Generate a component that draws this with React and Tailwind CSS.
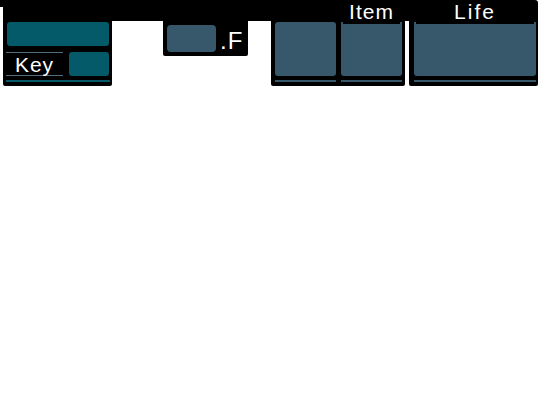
export default function App() {
  const font = { fontFamily: '"Liberation Sans", Arial, sans-serif' };
  const teal = "bg-[#045a69]";
  const slate = "bg-[#36586a]";
  return (
    <div className="w-[544px] h-[416px] bg-white relative overflow-hidden" style={font}>
      <div className="flex items-start">
        <div className="w-[3px] h-[7px] bg-black" />
        {/* Panel 1 */}
        <div className="w-[109px] h-[86px] bg-black rounded-b-[2px] flex flex-col pt-[22px] pl-[3px] pr-[3px]">
          <div className={`ml-[1px] w-[102px] h-[24px] ${teal} rounded-[3px]`} />
          <div className="flex mt-[6px] h-[24px] items-stretch">
            <div className="w-[57px] border-t border-b border-[#4f6e80] flex items-center justify-center text-white text-[21px] leading-none tracking-[1px]">
              Key
            </div>
            <div className={`ml-[6px] w-[40px] ${teal} rounded-[3px]`} />
          </div>
          <div className={`mt-[4px] w-[104px] h-[2px] ${teal}`} />
        </div>
        <div className="w-[51px] h-[21px] bg-black" />
        {/* Panel 2 */}
        <div className="w-[85px] h-[56px] bg-black rounded-b-[2px] flex items-end pl-[4px] pb-[4px]">
          <div className={`w-[49px] h-[27px] ${slate} rounded-[4px]`} />
          <div className="ml-[4px] text-white text-[24px] leading-none tracking-[1px] mb-[-1px]">.F</div>
        </div>
        <div className="w-[23px] h-[21px] bg-black" />
        {/* Panel 3 */}
        <div className="w-[134px] h-[86px] bg-black rounded-b-[2px] flex flex-col pl-[4px] pr-[3px]">
          <div className="flex h-[22px]">
            <div className="w-[66px]" />
            <div className="w-[61px] flex items-center justify-center text-white text-[21px] leading-none tracking-[1px]">Item</div>
          </div>
          <div className="flex gap-[5px]">
            <div className={`w-[61px] h-[54px] ${slate} rounded-[3px]`} />
            <div className="w-[61px] h-[54px] flex flex-col">
              <div className="flex justify-between h-[2px]">
                <div className={`w-[2px] h-[2px] ${slate}`} />
                <div className={`w-[2px] h-[2px] ${slate}`} />
              </div>
              <div className={`flex-1 ${slate} rounded-b-[3px]`} />
            </div>
          </div>
          <div className="flex gap-[5px] mt-[4px]">
            <div className={`w-[61px] h-[2px] ${slate}`} />
            <div className={`w-[61px] h-[2px] ${slate}`} />
          </div>
        </div>
        <div className="w-[4px] h-[21px] bg-black" />
        {/* Panel 4 */}
        <div className="w-[129px] h-[86px] bg-black rounded-b-[2px] rounded-tr-[3px] flex flex-col pl-[5px] pr-[2px]">
          <div className="h-[22px] flex items-center justify-center text-white text-[21px] leading-none tracking-[2px]">Life</div>
          <div className="w-[122px] h-[54px] flex flex-col">
            <div className="flex justify-between h-[2px]">
              <div className={`w-[2px] h-[2px] ${slate}`} />
              <div className={`w-[2px] h-[2px] ${slate}`} />
            </div>
            <div className={`flex-1 ${slate} rounded-b-[3px]`} />
          </div>
          <div className={`mt-[4px] w-[122px] h-[2px] ${slate}`} />
        </div>
      </div>
    </div>
  );
}
